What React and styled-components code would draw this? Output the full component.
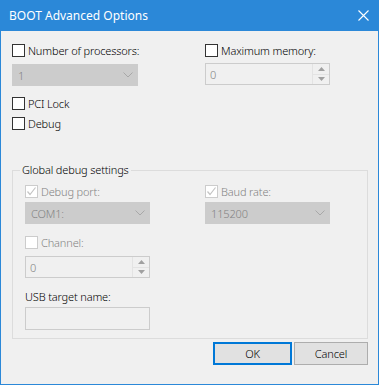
import React from "react";
import styled, { createGlobalStyle } from "styled-components";

const GlobalStyle = createGlobalStyle`
  html, body {
    margin: 0;
    padding: 0;
    background: #ffffff;
  }
  body {
    font-family: "Noto Sans", "Liberation Sans", sans-serif;
    font-size: 11px;
    font-weight: 300;
    letter-spacing: -0.15px;
    color: #000;
  }
`;

const Window = styled.div`
  width: 379px;
  height: 385px;
  box-sizing: border-box;
  border: 1px solid #2b88d8;
  border-top: none;
  background: #f0f0f0;
  display: flex;
  flex-direction: column;
`;

const TitleBar = styled.div`
  height: 31px;
  flex: none;
  background: #2b88d8;
  color: #ffffff;
  display: flex;
  align-items: center;
  justify-content: space-between;
  padding: 0 9px 0 8px;
  font-size: 12px;
  font-weight: 400;
  letter-spacing: 0;
`;

const Client = styled.div`
  flex: 1;
  display: flex;
  flex-direction: column;
  padding: 12px 10px 0 11px;
`;

const TopGrid = styled.div`
  display: grid;
  grid-template-columns: 193px 1fr;
`;

const Field = styled.div`
  display: flex;
  flex-direction: column;
  align-items: flex-start;
  margin-top: ${(p) => p.$mt || 0}px;
`;

const CheckRow = styled.label`
  display: flex;
  align-items: center;
  height: 15px;
  gap: 3px;
  color: ${(p) => (p.$disabled ? "#838383" : "#000")};
  margin-top: ${(p) => p.$mt || 0}px;
`;

const Box = styled.span`
  width: 11px;
  height: 11px;
  border: 1px solid ${(p) => (p.$disabled ? "#cccccc" : "#333333")};
  background: #ffffff;
  display: flex;
  align-items: center;
  justify-content: center;
  flex: none;
`;

const Combo = styled.div`
  width: ${(p) => p.$w || 125}px;
  height: 22px;
  box-sizing: border-box;
  margin-top: ${(p) => p.$mt || 0}px;
  background: #cccccc;
  border: 1px solid #cccccc;
  color: #838383;
  display: flex;
  align-items: center;
  justify-content: space-between;
  padding: 0 4px 0 5px;
`;

const Spin = styled.div`
  width: 125px;
  height: 22px;
  box-sizing: border-box;
  margin-top: ${(p) => p.$mt || 0}px;
  border: 1px solid #cccccc;
  background: #f0f0f0;
  color: #838383;
  display: flex;
  align-items: stretch;
`;

const SpinText = styled.div`
  flex: 1;
  display: flex;
  align-items: center;
  padding-left: 4px;
`;

const SpinButtons = styled.div`
  width: 16px;
  display: flex;
  flex-direction: column;
  border-left: 1px solid #e3e3e3;
`;

const SpinHalf = styled.div`
  flex: 1;
  display: flex;
  align-items: center;
  justify-content: center;
  border-top: ${(p) => (p.$bottom ? "1px solid #e3e3e3" : "none")};
`;

const TextBox = styled.div`
  width: 125px;
  height: 23px;
  box-sizing: border-box;
  margin-top: ${(p) => p.$mt || 0}px;
  border: 1px solid #cccccc;
  background: #f0f0f0;
`;

const Group = styled.fieldset`
  margin: 31px 0 0 0;
  padding: 0 12px 8px 12px;
  border: 1px solid #dcdcdc;
  min-width: 0;
`;

const Legend = styled.legend`
  padding: 0 2px;
  margin-left: -5px;
  line-height: 16px;
`;

const GroupGrid = styled.div`
  display: grid;
  grid-template-columns: 180px 1fr;
  margin-top: 6px;
`;

const Label = styled.div`
  height: 15px;
  display: flex;
  align-items: center;
  margin-top: ${(p) => p.$mt || 0}px;
`;

const ButtonRow = styled.div`
  display: flex;
  justify-content: flex-end;
  gap: 2px;
  margin-top: 3px;
`;

const Button = styled.button`
  width: ${(p) => p.$w}px;
  height: 23px;
  box-sizing: border-box;
  background: #e1e1e1;
  border: ${(p) => (p.$primary ? "2px solid #0078d7" : "1px solid #adadad")};
  font-family: inherit;
  font-size: 11px;
  font-weight: inherit;
  letter-spacing: inherit;
  color: #000;
  padding: 0;
`;

const Chevron = () => (
  <svg width="10" height="6" viewBox="0 0 10 6">
    <path d="M0.5 0.5 L5 5 L9.5 0.5" fill="none" stroke="#a8a8a8" strokeWidth="1" />
  </svg>
);

const Tick = ({ color }) => (
  <svg width="11" height="11" viewBox="0 0 11 11">
    <path d="M1.5 5.5 L4 8.5 L9.5 1.5" fill="none" stroke={color} strokeWidth="1.2" />
  </svg>
);

const Check = ({ label, checked, disabled, mt }) => (
  <CheckRow $disabled={disabled} $mt={mt}>
    <Box $disabled={disabled}>{checked && <Tick color="#c4c4c4" />}</Box>
    {label}
  </CheckRow>
);

const SpinBox = ({ value, mt }) => (
  <Spin $mt={mt}>
    <SpinText>{value}</SpinText>
    <SpinButtons>
      <SpinHalf>
        <svg width="7" height="4" viewBox="0 0 7 4">
          <path d="M0 4 L3.5 0 L7 4 Z" fill="#a0a0a0" />
        </svg>
      </SpinHalf>
      <SpinHalf $bottom>
        <svg width="7" height="4" viewBox="0 0 7 4">
          <path d="M0 0 L3.5 4 L7 0 Z" fill="#a0a0a0" />
        </svg>
      </SpinHalf>
    </SpinButtons>
  </Spin>
);

const DropDown = ({ value, w, mt }) => (
  <Combo $w={w} $mt={mt}>
    <span>{value}</span>
    <Chevron />
  </Combo>
);

export default function App() {
  return (
    <>
      <GlobalStyle />
      <Window>
        <TitleBar>
          <span>BOOT Advanced Options</span>
          <svg width="11" height="11" viewBox="0 0 11 11">
            <path d="M0.5 0.5 L10.5 10.5 M10.5 0.5 L0.5 10.5" stroke="#fff" strokeWidth="1.1" />
          </svg>
        </TitleBar>
        <Client>
          <TopGrid>
            <Field>
              <Check label="Number of processors:" />
              <DropDown value="1" w={126} mt={6} />
            </Field>
            <Field>
              <Check label="Maximum memory:" />
              <SpinBox value="0" mt={5} />
            </Field>
          </TopGrid>
          <Check label="PCI Lock" mt={10} />
          <Check label="Debug" mt={5} />

          <Group>
            <Legend>Global debug settings</Legend>
            <GroupGrid>
              <Field>
                <Check label="Debug port:" checked disabled />
                <DropDown value="COM1:" mt={3} />
                <Check label="Channel:" disabled mt={11} />
                <SpinBox value="0" mt={6} />
                <Label $mt={11}>USB target name:</Label>
                <TextBox $mt={3} />
              </Field>
              <Field>
                <Check label="Baud rate:" checked disabled />
                <DropDown value="115200" mt={3} />
              </Field>
            </GroupGrid>
          </Group>

          <ButtonRow>
            <Button $primary $w={79}>OK</Button>
            <Button $w={74}>Cancel</Button>
          </ButtonRow>
        </Client>
      </Window>
    </>
  );
}
